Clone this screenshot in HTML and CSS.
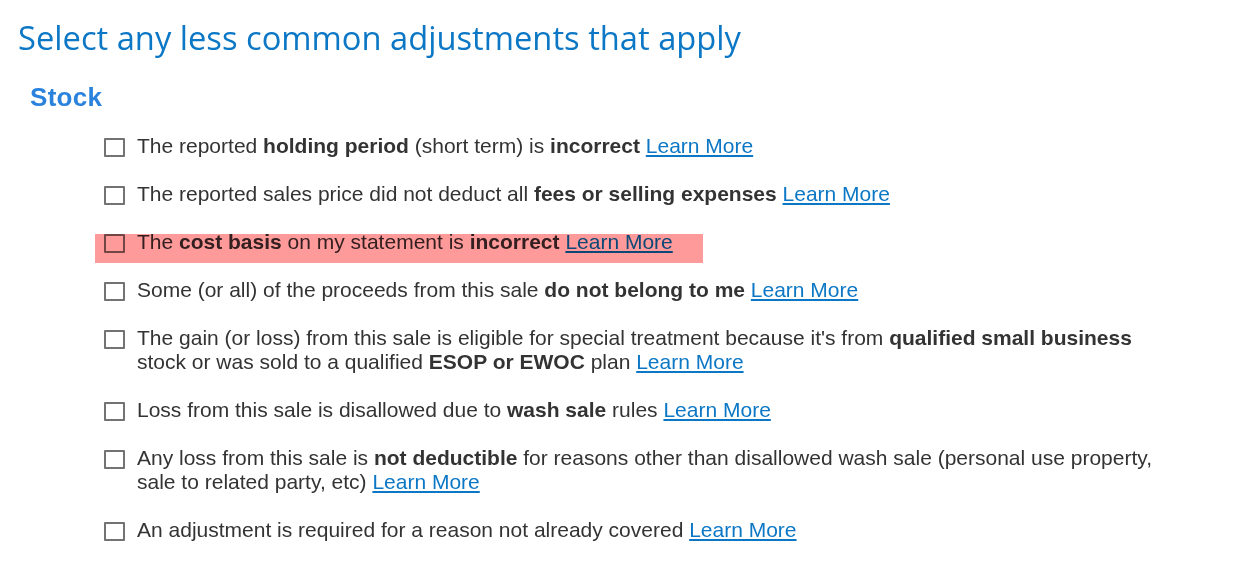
FILE: index.html
```html
<!DOCTYPE html>
<html lang="en">
<head>
    <meta charset="UTF-8">
    <meta name="viewport" content="width=device-width, initial-scale=1.0">
    <title>Less Common Adjustments</title>
    <link rel="stylesheet" href="styles.css">
</head>
<body>
    <div class="page">
        <h1>Select any less common adjustments that apply</h1>
        <h2>Stock</h2>
        <ul class="options">
            <li><span class="box"></span><p>The reported <b>holding period</b> (short term) is <b>incorrect</b> <a href="#">Learn More</a></p></li>
            <li><span class="box"></span><p>The reported sales price did not deduct all <b>fees or selling expenses</b> <a href="#">Learn More</a></p></li>
            <li class="marked"><span class="box"></span><p>The <b>cost basis</b> on my statement is <b>incorrect</b> <a href="#">Learn More</a></p></li>
            <li><span class="box"></span><p>Some (or all) of the proceeds from this sale <b>do not belong to me</b> <a href="#">Learn More</a></p></li>
            <li><span class="box"></span><p>The gain (or loss) from this sale is eligible for special treatment because it's from <b>qualified small business</b> stock or was sold to a qualified <b>ESOP or EWOC</b> plan <a href="#">Learn More</a></p></li>
            <li><span class="box"></span><p>Loss from this sale is disallowed due to <b>wash sale</b> rules <a href="#">Learn More</a></p></li>
            <li><span class="box"></span><p>Any loss from this sale is <b>not deductible</b> for reasons other than disallowed wash sale (personal use property, sale to related party, etc) <a href="#">Learn More</a></p></li>
            <li><span class="box"></span><p>An adjustment is required for a reason not already covered <a href="#">Learn More</a></p></li>
        </ul>
    </div>
</body>
</html>
```

FILE: styles.css
```css
:root {
    --heading-blue: #0b77c5;
    --section-blue: #2a82dc;
    --link-blue: #0b77c5;
    --text-dark: #333333;
    --box-border: #737373;
}

body {
    margin: 0;
    background: #ffffff;
    font-family: "Liberation Sans", Arial, sans-serif;
    color: var(--text-dark);
}

.page {
    padding: 16px 18px 0 18px;
}

h1 {
    margin: 0;
    font-family: "Open Sans", sans-serif;
    font-weight: 400;
    font-size: 32.7px;
    line-height: 44px;
    color: var(--heading-blue);
}

h2 {
    margin: 22px 0 0 12px;
    font-size: 26px;
    line-height: 30px;
    font-weight: 700;
    letter-spacing: 0.3px;
    color: var(--section-blue);
}

.options {
    list-style: none;
    margin: 22px 0 0 86px;
    padding: 0;
    max-width: 1063px;
}

.options li {
    display: flex;
    align-items: flex-start;
    gap: 12px;
    margin-bottom: 24px;
    position: relative;
}

.box {
    flex: none;
    width: 17px;
    height: 15px;
    margin-top: 4px;
    border: 2px solid var(--box-border);
    border-radius: 1px;
    background: #fff;
}

.options p {
    margin: 0;
    font-size: 21px;
    line-height: 24px;
}

.options b {
    font-weight: 700;
}

.options a {
    color: var(--link-blue);
    text-decoration: underline;
}

/* red marker over the cost basis row */
.marked::after {
    content: "";
    position: absolute;
    left: -9px;
    top: 4px;
    width: 608px;
    height: 29px;
    background: #ff9a9a;
    mix-blend-mode: multiply;
}
```
